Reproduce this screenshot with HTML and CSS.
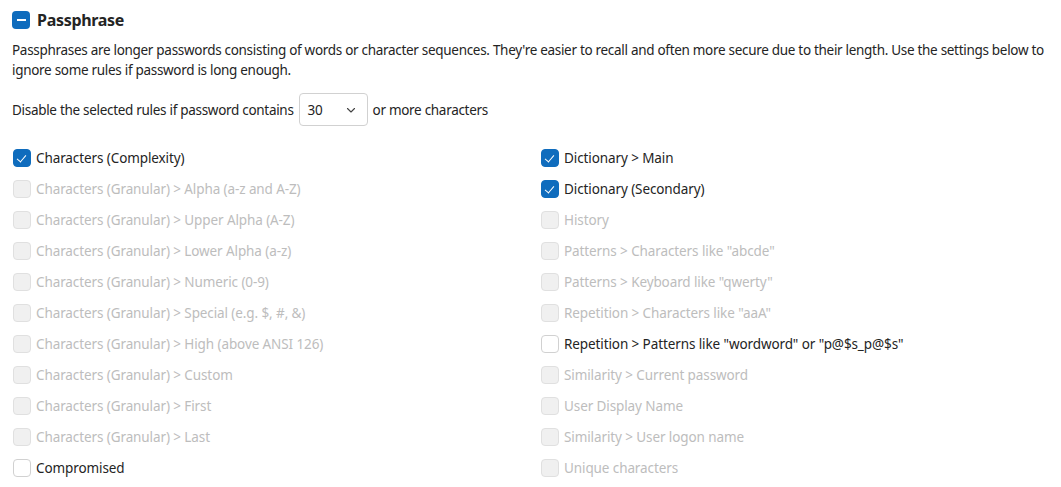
FILE: index.html
```html
<!DOCTYPE html>
<html>
<head>
  <title>Passphrase</title>
  <link rel="stylesheet" href="styles.css">
</head>
<body>
  <section class="policy">
    <div class="policy-head">
      <span class="toggle"><span class="toggle-bar"></span></span>
      <h2>Passphrase</h2>
    </div>
    <p class="policy-desc">Passphrases are longer passwords consisting of words or character sequences. They're easier to recall and often more secure due to their length. Use the settings below to ignore some rules if password is long enough.</p>

    <div class="threshold">
      <span>Disable the selected rules if password contains</span>
      <div class="dropdown">
        <span>30</span>
        <svg width="12" height="12" viewBox="0 0 12 12"><path d="M2.5 4.5 L6 8 L9.5 4.5" fill="none" stroke="#424242" stroke-width="1.1" stroke-linecap="round" stroke-linejoin="round"/></svg>
      </div>
      <span>or more characters</span>
    </div>

    <div class="rules">
      <div class="rule-col">
        <label class="rule checked"><span class="box"></span>Characters (Complexity)</label>
        <label class="rule disabled"><span class="box"></span>Characters (Granular) &gt; Alpha (a-z and A-Z)</label>
        <label class="rule disabled"><span class="box"></span>Characters (Granular) &gt; Upper Alpha (A-Z)</label>
        <label class="rule disabled"><span class="box"></span>Characters (Granular) &gt; Lower Alpha (a-z)</label>
        <label class="rule disabled"><span class="box"></span>Characters (Granular) &gt; Numeric (0-9)</label>
        <label class="rule disabled"><span class="box"></span>Characters (Granular) &gt; Special (e.g. $, #, &amp;)</label>
        <label class="rule disabled"><span class="box"></span>Characters (Granular) &gt; High (above ANSI 126)</label>
        <label class="rule disabled"><span class="box"></span>Characters (Granular) &gt; Custom</label>
        <label class="rule disabled"><span class="box"></span>Characters (Granular) &gt; First</label>
        <label class="rule disabled"><span class="box"></span>Characters (Granular) &gt; Last</label>
        <label class="rule"><span class="box"></span>Compromised</label>
      </div>
      <div class="rule-col">
        <label class="rule checked"><span class="box"></span>Dictionary &gt; Main</label>
        <label class="rule checked"><span class="box"></span>Dictionary (Secondary)</label>
        <label class="rule disabled"><span class="box"></span>History</label>
        <label class="rule disabled"><span class="box"></span>Patterns &gt; Characters like "abcde"</label>
        <label class="rule disabled"><span class="box"></span>Patterns &gt; Keyboard like "qwerty"</label>
        <label class="rule disabled"><span class="box"></span>Repetition &gt; Characters like "aaA"</label>
        <label class="rule"><span class="box"></span>Repetition &gt; Patterns like "wordword" or "p@$s_p@$s"</label>
        <label class="rule disabled"><span class="box"></span>Similarity &gt; Current password</label>
        <label class="rule disabled"><span class="box"></span>User Display Name</label>
        <label class="rule disabled"><span class="box"></span>Similarity &gt; User logon name</label>
        <label class="rule disabled"><span class="box"></span>Unique characters</label>
      </div>
    </div>
  </section>
</body>
</html>
```

FILE: styles.css
```css
body {
  font-family: 'Noto Sans', 'Open Sans', sans-serif;
  font-size: 13.5px;
  letter-spacing: -0.3px;
  color: #242424;
  background-color: #fff;
  margin: 0;
  padding: 10px 12px;
}

.policy-head {
  display: flex;
  align-items: center;
  gap: 7px;
  height: 20px;
}

.toggle {
  width: 18px;
  height: 18px;
  border-radius: 4px;
  background-color: #0f6cbd;
  display: flex;
  align-items: center;
  justify-content: center;
}

.toggle-bar {
  width: 9px;
  height: 1.5px;
  background-color: #fff;
}

.policy-head h2 {
  font-size: 16px;
  font-weight: 700;
  margin: 0;
}

.policy-desc {
  margin: 10px 0 0;
  line-height: 20px;
}

.threshold {
  display: flex;
  align-items: center;
  gap: 5px;
  margin-top: 13px;
}

.dropdown {
  width: 69px;
  height: 33px;
  box-sizing: border-box;
  border: 1px solid #d1d1d1;
  border-radius: 4px;
  padding: 0 10px 0 8px;
  display: flex;
  align-items: center;
  justify-content: space-between;
}

.rules {
  display: grid;
  grid-template-columns: 528px 1fr;
  margin-top: 16px;
  letter-spacing: -0.1px;
}

.rule-col {
  display: flex;
  flex-direction: column;
}

.rule {
  display: flex;
  align-items: center;
  gap: 5px;
  height: 31px;
}

.box {
  width: 18px;
  height: 18px;
  box-sizing: border-box;
  border: 1px solid #d1d1d1;
  border-radius: 4px;
  margin-left: 1px;
  position: relative;
}

.rule.checked .box {
  background-color: #0f6cbd;
  border-color: #0f6cbd;
}

.rule.checked .box::after {
  content: "";
  position: absolute;
  left: 5px;
  top: 3px;
  width: 4px;
  height: 8px;
  border: solid #fff;
  border-width: 0 1.2px 1.2px 0;
  transform: rotate(40deg);
}

.rule.disabled {
  color: #bdbdbd;
}

.rule.disabled .box {
  background-color: #f0f0f0;
  border-color: #e0e0e0;
}
```
